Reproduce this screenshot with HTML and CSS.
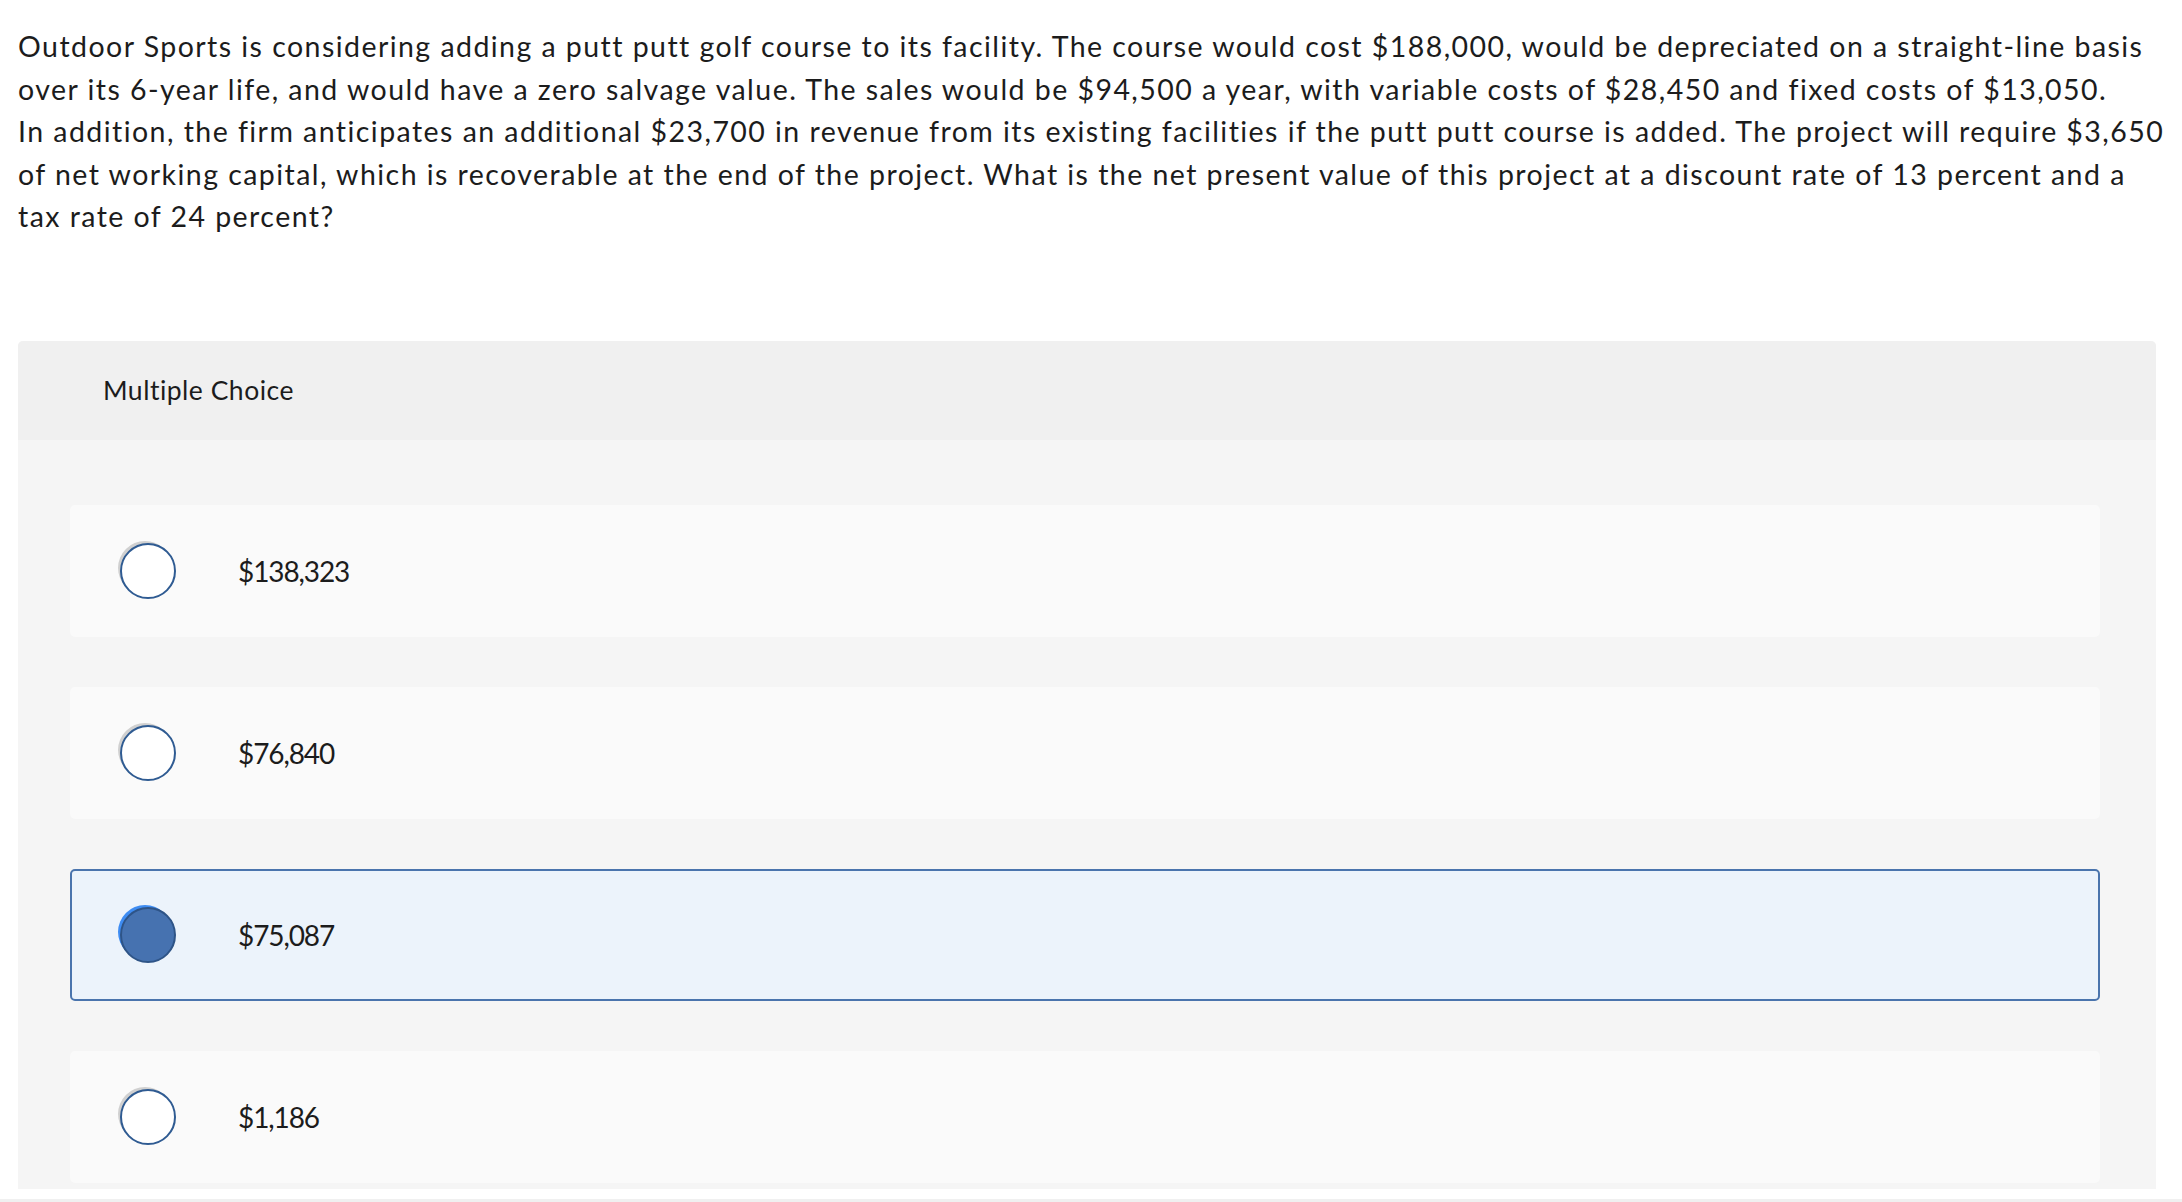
FILE: index.html
```html
<!DOCTYPE html>
<html lang="en">
<head>
<meta charset="utf-8">
<title>Multiple Choice</title>
<link rel="stylesheet" href="styles.css">
</head>
<body>
<main class="page">
  <p class="question">Outdoor Sports is considering adding a putt putt golf course to its facility. The course would cost $188,000, would be depreciated on a straight-line basis<br>over its 6-year life, and would have a zero salvage value. The sales would be $94,500 a year, with variable costs of $28,450 and fixed costs of $13,050.<br>In addition, the firm anticipates an additional $23,700 in revenue from its existing facilities if the putt putt course is added. The project will require $3,650<br>of net working capital, which is recoverable at the end of the project. What is the net present value of this project at a discount rate of 13 percent and a<br>tax rate of 24 percent?</p>
  <section class="mc">
    <div class="mc-header">Multiple Choice</div>
    <div class="mc-body">
      <div class="option"><span class="radio"></span><span class="label">$138,323</span></div>
      <div class="option"><span class="radio"></span><span class="label">$76,840</span></div>
      <div class="option selected"><span class="radio"></span><span class="label">$75,087</span></div>
      <div class="option"><span class="radio"></span><span class="label">$1,186</span></div>
    </div>
  </section>
  <div class="footer-strip"></div>
</main>
</body>
</html>
```
FILE: styles.css
```css
html, body {
  margin: 0;
  padding: 0;
  background: #ffffff;
}
.page {
  font-family: Lato, "Liberation Sans", sans-serif;
  color: #1c1c1c;
  overflow: hidden;
  height: 1202px;
}
.question {
  margin: 25px 0 0 18px;
  width: 2162px;
  font-size: 28.5px;
  line-height: 42.5px;
  letter-spacing: 1.45px;
}
.mc {
  margin: 103px 0 0 18px;
  width: 2138px;
  border-radius: 5px 5px 0 0;
  overflow: hidden;
  background: #f5f5f5;
}
.mc-header {
  height: 99px;
  background: #f0f0f0;
  display: flex;
  align-items: center;
  padding-left: 85px;
  font-size: 26.5px;
  letter-spacing: 0.5px;
  color: #1c1c1c;
}
.mc-body {
  display: flex;
  flex-direction: column;
  gap: 50px;
  padding: 65px 56px 6px 52px;
}
.option {
  box-sizing: border-box;
  height: 132px;
  border-radius: 5px;
  background: #fafafa;
  display: flex;
  align-items: center;
  padding-left: 50px;
  gap: 62px;
}
.option.selected {
  background: #ecf3fb;
  border: 2px solid #4a74ad;
  padding-left: 48px;
}
.radio {
  box-sizing: border-box;
  width: 56px;
  height: 56px;
  border-radius: 50%;
  border: 2.5px solid #2f5b92;
  background: #ffffff;
  box-shadow: -3px -3px 0 -1px #d0d0d0;
  flex: none;
}
.option.selected .radio {
  background: #4672b0;
  border-color: #2e5487;
  box-shadow: -3px -3px 0 -1px #3e8cf2;
}
.label {
  font-size: 28px;
  letter-spacing: -1.1px;
  color: #1c1c1c;
}
.footer-strip {
  margin-top: 10px;
  height: 10px;
  background: #f0f0f0;
}
```
